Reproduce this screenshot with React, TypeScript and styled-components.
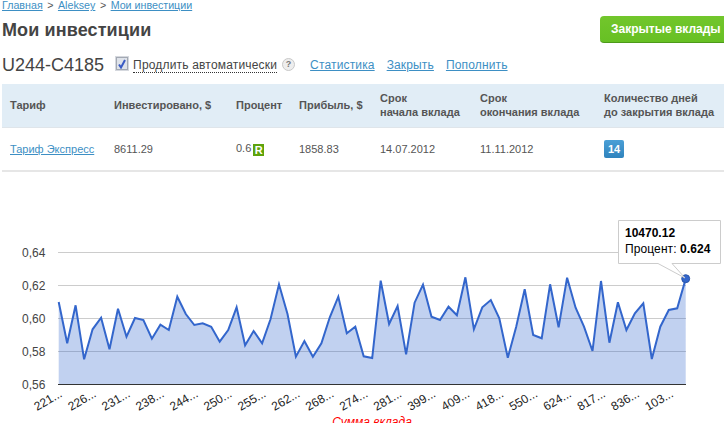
import React from 'react';
import styled, {createGlobalStyle} from 'styled-components';

const GlobalStyle = createGlobalStyle`
  html, body {
    margin: 0;
    padding: 0;
    height: 423px;
    overflow: hidden;
    background: #fff;
  }
  body {
    font-family: "Liberation Sans", Arial, sans-serif;
    color: #444;
  }
`

const Page = styled.div`
  width: 724px;
  height: 423px;
  overflow: hidden;
  padding-left: 2px;
  box-sizing: border-box;
`
const Breadcrumbs = styled.div`
  display: flex;
  gap: 4.5px;
  height: 14px;
  margin-top: -1px;
  font-size: 10.7px;
  line-height: 13px;
  color: #555;
`
const Crumb = styled.a`
  color: #3d8fc4;
  text-decoration: underline;
`
const TitleRow = styled.div`
  display: flex;
  justify-content: space-between;
  align-items: flex-start;
  height: 37px;
`
const Title = styled.h1`
  margin: 4px 0 0;
  font-size: 18px;
  letter-spacing: 0.12px;
  line-height: 26px;
  font-weight: bold;
  color: #444;
`
const GreenButton = styled.button`
  flex: none;
  width: 130px;
  height: 27px;
  margin: 3px -6px 0 0;
  padding: 0 0 0 11px;
  text-align: left;
  border: none;
  border-bottom: 1px solid #4c9a1a;
  border-radius: 4px;
  background: linear-gradient(#72c62c, #67c024);
  color: #fff;
  font-family: inherit;
  font-size: 12px;
  font-weight: bold;
`
const ActionsRow = styled.div`
  display: flex;
  align-items: center;
  height: 30px;
  margin-bottom: 4px;
`
const Account = styled.span`
  font-size: 18px;
  color: #444;
  margin-right: 12px;
`
const CheckBox = styled.span`
  display: flex;
  align-items: center;
  justify-content: center;
  box-sizing: border-box;
  width: 12px;
  height: 13px;
  margin: 0 5px 3px 0;
  border: 1px solid #a3a9b3;
  outline: 1px solid #d5d8de;
  background: #dfe3ea;
`
const AutoLabel = styled.span`
  font-size: 12px;
  letter-spacing: 0.18px;
  color: #444;
  border-bottom: 1px dotted #333;
  margin-right: 5px;
`
const Help = styled.span`
  box-sizing: border-box;
  width: 13px;
  height: 13px;
  border-radius: 50%;
  border: 1px solid #c8c8c8;
  background: #eee;
  color: #777;
  font-size: 9px;
  font-weight: bold;
  line-height: 11px;
  text-align: center;
  margin: 0 15px 2px 0;
`
const ActionLink = styled.a`
  font-size: 12px;
  letter-spacing: 0.15px;
  color: #3d8fc4;
  text-decoration: underline;
  margin-right: 12px;
`
const Table = styled.table`
  width: 722px;
  border-collapse: collapse;
  table-layout: fixed;
  font-size: 11px;
`
const HeadRow = styled.tr`
  height: 43px;
  background: #e1edf6;
  border-bottom: 1px solid #dfe5ea;
`
const Th = styled.th<{$width: number}>`
  box-sizing: border-box;
  width: ${p => p.$width}px;
  padding: 0 0 0 8px;
  text-align: left;
  font-weight: bold;
  line-height: 14px;
  color: #555;
`
const BodyRow = styled.tr`
  height: 44px;
  border-bottom: 2px solid #e6e6e6;
`
const Td = styled.td`
  padding: 0 0 0 8px;
  color: #555;
`
const TariffLink = styled.a`
  color: #3d8fc4;
  text-decoration: underline;
`
const RBadge = styled.span`
  display: inline-block;
  width: 11px;
  height: 12px;
  margin: 1px 0 0 2px;
  background: #5ea30c;
  color: #fff;
  font-weight: bold;
  line-height: 12px;
  text-align: center;
  vertical-align: middle;
`
const DaysBadge = styled.span`
  display: inline-block;
  width: 20px;
  height: 18px;
  border-radius: 2px;
  background: linear-gradient(#4a9fd6, #2f83bd);
  color: #fff;
  font-weight: bold;
  line-height: 18px;
  text-align: center;
`
const ChartBox = styled.div`
  margin: 38px 0 0 -2px;
  width: 724px;
  height: 213px;
`
const ChartSvg = styled.svg`
  display: block;
  font-family: "Liberation Sans", Arial, sans-serif;
`

// y of every point, in page pixels as the chart library drew them
const points = [
  302, 343.3, 305.3, 359.3, 329.3, 317.7, 349.3, 308.7, 336.7, 318, 320, 338.7, 324.7, 330, 296.7,
  314, 325, 323.3, 326.7, 341.7, 330, 307.3, 345.3, 331, 343.3, 319.3, 284.3, 314, 356.7, 341,
  356.7, 343.3, 317.3, 296.7, 333.3, 326.7, 356.3, 358, 280.7, 324, 306, 354.3, 302.7, 284.7, 316.7,
  320, 306.7, 315.3, 277.3, 329.3, 307.3, 300, 318.3, 357.7, 326.7, 289.3, 335, 338.3, 284.3, 327.3,
  277.7, 307.7, 326.7, 351, 281, 342.7, 302.3, 330, 313.3, 303.3, 359, 326.7, 310, 308.3, 278.7,
]
const top = 210
const left = 58.7
const step = (685.7 - left) / (points.length - 1)
const baseY = 384.5 - top
const line = points.map((y, i) => `${(left + i * step).toFixed(1)},${(y - top).toFixed(1)}`).join(' ')
const area = `${left},${baseY} ${line} ${left + step * (points.length - 1)},${baseY}`

const yTicks = ['0,64', '0,62', '0,60', '0,58', '0,56']
const xLabels = ['221', '226', '231', '238', '244', '250', '255', '262', '268', '274', '281', '399', '409', '418', '550', '624', '817', '836', '103']

const Chart: React.FC = () => (
    <ChartSvg width={724} height={213} viewBox="0 0 724 213">
        {yTicks.map((t, i) => {
            const y = 42.5 + i * 33
            return (
                <g key={t}>
                    <text x={22} y={y + 4.5} fontSize={12} fill="#444">{t}</text>
                    {i < 4 && <line x1={58} x2={686} y1={y} y2={y} stroke="#ccc"/>}
                </g>
            )
        })}
        <polygon points={area} fill="#3366cc" fillOpacity={0.3}/>
        <polyline points={line} fill="none" stroke="#3366cc" strokeWidth={2}/>
        <line x1={58} x2={686} y1={baseY} y2={baseY} stroke="#333"/>
        {xLabels.map((l, i) => {
            const x = 63 + i * 33.95
            return (
                <text key={l} x={x} y={186} fontSize={12} fill="#222" textAnchor="end" transform={`rotate(-30 ${x} 186)`}>
                    {l}...
                </text>
            )
        })}
        <text x={372} y={216} fontSize={12} fontStyle="italic" fill="#f00" textAnchor="middle">Сумма вклада</text>
        <circle cx={685.7} cy={68.7} r={4} fill="#3366cc" stroke="#2a55aa"/>
        <path d="M618.5 10.5H720.5V53.5H672L685 68L658 53.5H618.5Z" fill="#fff" stroke="#ccc"/>
        <text x={625} y={27} fontSize={12} fontWeight="bold" fill="#000">10470.12</text>
        <text x={625} y={43} fontSize={12} letterSpacing={0.1} fill="#000">
            Процент: <tspan fontWeight="bold">0.624</tspan>
        </text>
    </ChartSvg>
)

const App: React.FC = () => {
    return (
        <Page>
            <GlobalStyle/>
            <Breadcrumbs>
                <Crumb>Главная</Crumb><span>&gt;</span>
                <Crumb>Aleksey</Crumb><span>&gt;</span>
                <Crumb>Мои инвестиции</Crumb>
            </Breadcrumbs>
            <TitleRow>
                <Title>Мои инвестиции</Title>
                <GreenButton>Закрытые вклады</GreenButton>
            </TitleRow>
            <ActionsRow>
                <Account>U244-C4185</Account>
                <CheckBox>
                    <svg width="10" height="10" viewBox="0 0 10 10">
                        <path d="M2 5.5L4 8.5L8 1" fill="none" stroke="#3a5bc4" strokeWidth="2"/>
                    </svg>
                </CheckBox>
                <AutoLabel>Продлить автоматически</AutoLabel>
                <Help>?</Help>
                <ActionLink>Статистика</ActionLink>
                <ActionLink>Закрыть</ActionLink>
                <ActionLink>Пополнить</ActionLink>
            </ActionsRow>
            <Table>
                <thead>
                    <HeadRow>
                        <Th $width={104}>Тариф</Th>
                        <Th $width={122}>Инвестировано, $</Th>
                        <Th $width={63}>Процент</Th>
                        <Th $width={81}>Прибыль, $</Th>
                        <Th $width={100}>Срок<br/>начала вклада</Th>
                        <Th $width={124}>Срок<br/>окончания вклада</Th>
                        <Th $width={128}>Количество дней<br/>до закрытия вклада</Th>
                    </HeadRow>
                </thead>
                <tbody>
                    <BodyRow>
                        <Td><TariffLink>Тариф Экспресс</TariffLink></Td>
                        <Td>8611.29</Td>
                        <Td>0.6<RBadge>R</RBadge></Td>
                        <Td>1858.83</Td>
                        <Td>14.07.2012</Td>
                        <Td>11.11.2012</Td>
                        <Td><DaysBadge>14</DaysBadge></Td>
                    </BodyRow>
                </tbody>
            </Table>
            <ChartBox>
                <Chart/>
            </ChartBox>
        </Page>
    );
};

export default App;
